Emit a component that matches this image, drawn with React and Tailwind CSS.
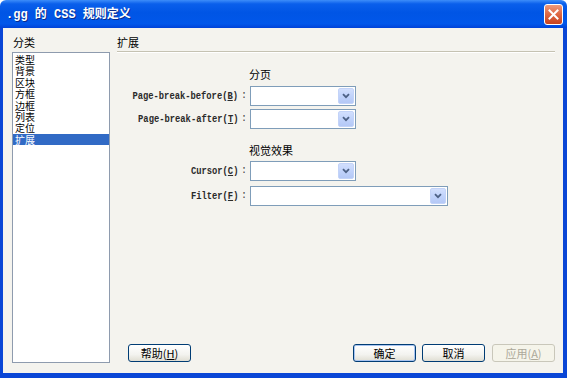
import React from "react";

const cjk = "'Noto Sans CJK SC', 'Liberation Sans', sans-serif";
const mono = "'Liberation Mono', 'Noto Sans CJK SC', monospace";

function Select({ width }) {
  return (
    <div
      className="h-[20px] border border-[#7F9DB9] bg-white flex justify-end p-px"
      style={{ width }}
    >
      <div className="w-[16px] h-full rounded-[2px] bg-[linear-gradient(180deg,#D2DFFD_0%,#C1D3FB_50%,#B4C8F6_100%)] border border-[#C3D3F8] flex items-center justify-center">
        <svg width="8" height="6" viewBox="0 0 8 6">
          <path d="M1 1.2 L4 4.2 L7 1.2" fill="none" stroke="#4D6185" strokeWidth="1.8" />
        </svg>
      </div>
    </div>
  );
}

function Label({ text, k }) {
  return (
    <div className="w-[121px] flex justify-end">
      <span
        className="origin-right scale-x-[0.8] whitespace-nowrap text-[11px] leading-[20px] font-bold text-[#2a2a2a]"
        style={{ fontFamily: mono }}
      >
        {text}(<span className="underline">{k}</span>)
      </span>
    </div>
  );
}

function Row({ text, k, width }) {
  return (
    <div className="flex h-[20px] items-center">
      <Label text={text} k={k} />
      <div className="w-[12px] text-center text-[10px] text-[#444] leading-[20px]" style={{ fontFamily: mono }}>:</div>
      <Select width={width} />
    </div>
  );
}

function Btn({ children, w = "w-[63px]", variant }) {
  const base =
    "h-[18px] rounded-[3px] flex items-center justify-center text-[11px] leading-none";
  if (variant === "disabled")
    return (
      <div className={`${base} ${w} border border-[#C9C7BA] bg-[#F5F4EA] text-[#ACA899]`} style={{ fontFamily: cjk }}>
        {children}
      </div>
    );
  return (
    <div
      className={`${base} ${w} border border-[#003C74] bg-[linear-gradient(180deg,#FFFFFF_0%,#F3F3EF_60%,#E0DED3_100%)] text-black ${
        variant === "default" ? "shadow-[inset_0_0_0_1px_#A8C4F0]" : ""
      }`}
      style={{ fontFamily: cjk }}
    >
      {children}
    </div>
  );
}

export default function App() {
  const items = ["类型", "背景", "区块", "方框", "边框", "列表", "定位", "扩展"];
  return (
    <div className="w-[567px] h-[378px] flex flex-col overflow-hidden">
      <div className="h-[28px] flex items-center pl-[6px] pr-[4px] bg-[linear-gradient(180deg,#3D8DF9_0%,#0A5FEB_14%,#0055E5_45%,#0157EA_85%,#0042D8_100%)] rounded-t-[6px]">
        <span
          className="text-white font-bold text-[12px] whitespace-nowrap pt-[1px]"
          style={{ fontFamily: mono, textShadow: "1px 1px 0 #0A2A8A" }}
        >
          .gg 的 CSS 规则定义
        </span>
        <div className="ml-auto w-[19px] h-[21px] rounded-[3px] border border-white bg-[linear-gradient(180deg,#EE9A7C_0%,#E06B46_45%,#C8421E_100%)] flex items-center justify-center">
          <svg width="11" height="11" viewBox="0 0 11 11">
            <path d="M1.5 1.5 L9.5 9.5 M9.5 1.5 L1.5 9.5" stroke="white" strokeWidth="2" strokeLinecap="square" />
          </svg>
        </div>
      </div>
      <div className="flex-1 flex border-l-[3px] border-r-[4px] border-b-[5px] border-[#0A46D6] bg-[#F4F3EE] pl-[9px] pr-[8px] pb-[10px]">
        <div className="w-[98px] flex flex-col">
          <div className="h-[24px] pt-[8px] pl-[1px] text-[11px] leading-[13px] text-black" style={{ fontFamily: cjk }}>
            分类
          </div>
          <div className="flex-1 border border-[#8E9BAE] bg-white pt-[1px]">
            {items.map((it) => (
              <div
                key={it}
                className={`h-[11.4px] pl-[2px] text-[10px] leading-[11.4px] ${
                  it === "扩展" ? "bg-[#316AC5] text-white" : "text-black"
                }`}
                style={{ fontFamily: cjk }}
              >
                {it}
              </div>
            ))}
          </div>
        </div>
        <div className="ml-[7px] flex-1 flex flex-col">
          <div className="h-[23px] pt-[8px] text-[11px] leading-[13px] text-black" style={{ fontFamily: cjk }}>
            扩展
          </div>
          <div className="h-px bg-[#C5C2B2]" />
          <div className="h-px bg-white" />
          <div className="mt-[15px] h-[13px] pl-[132px] text-[11px] leading-[13px] text-black" style={{ fontFamily: cjk }}>
            分页
          </div>
          <div className="mt-[5px]">
            <Row text="Page-break-before" k="B" width="106px" />
          </div>
          <div className="mt-[3px]">
            <Row text="Page-break-after" k="T" width="106px" />
          </div>
          <div className="mt-[15px] h-[13px] pl-[132px] text-[11px] leading-[13px] text-black" style={{ fontFamily: cjk }}>
            视觉效果
          </div>
          <div className="mt-[4px]">
            <Row text="Cursor" k="C" width="106px" />
          </div>
          <div className="mt-[5px]">
            <Row text="Filter" k="F" width="198px" />
          </div>
          <div className="flex-1" />
          <div className="flex mb-[1px]">
            <div className="ml-[11px]">
              <Btn>
                帮助(<span className="underline">H</span>)
              </Btn>
            </div>
            <div className="ml-auto flex gap-[6px]">
              <Btn variant="default">确定</Btn>
              <Btn>取消</Btn>
              <div className="ml-px">
                <Btn variant="disabled">
                  应用(<span className="underline">A</span>)
                </Btn>
              </div>
            </div>
          </div>
        </div>
      </div>
    </div>
  );
}
